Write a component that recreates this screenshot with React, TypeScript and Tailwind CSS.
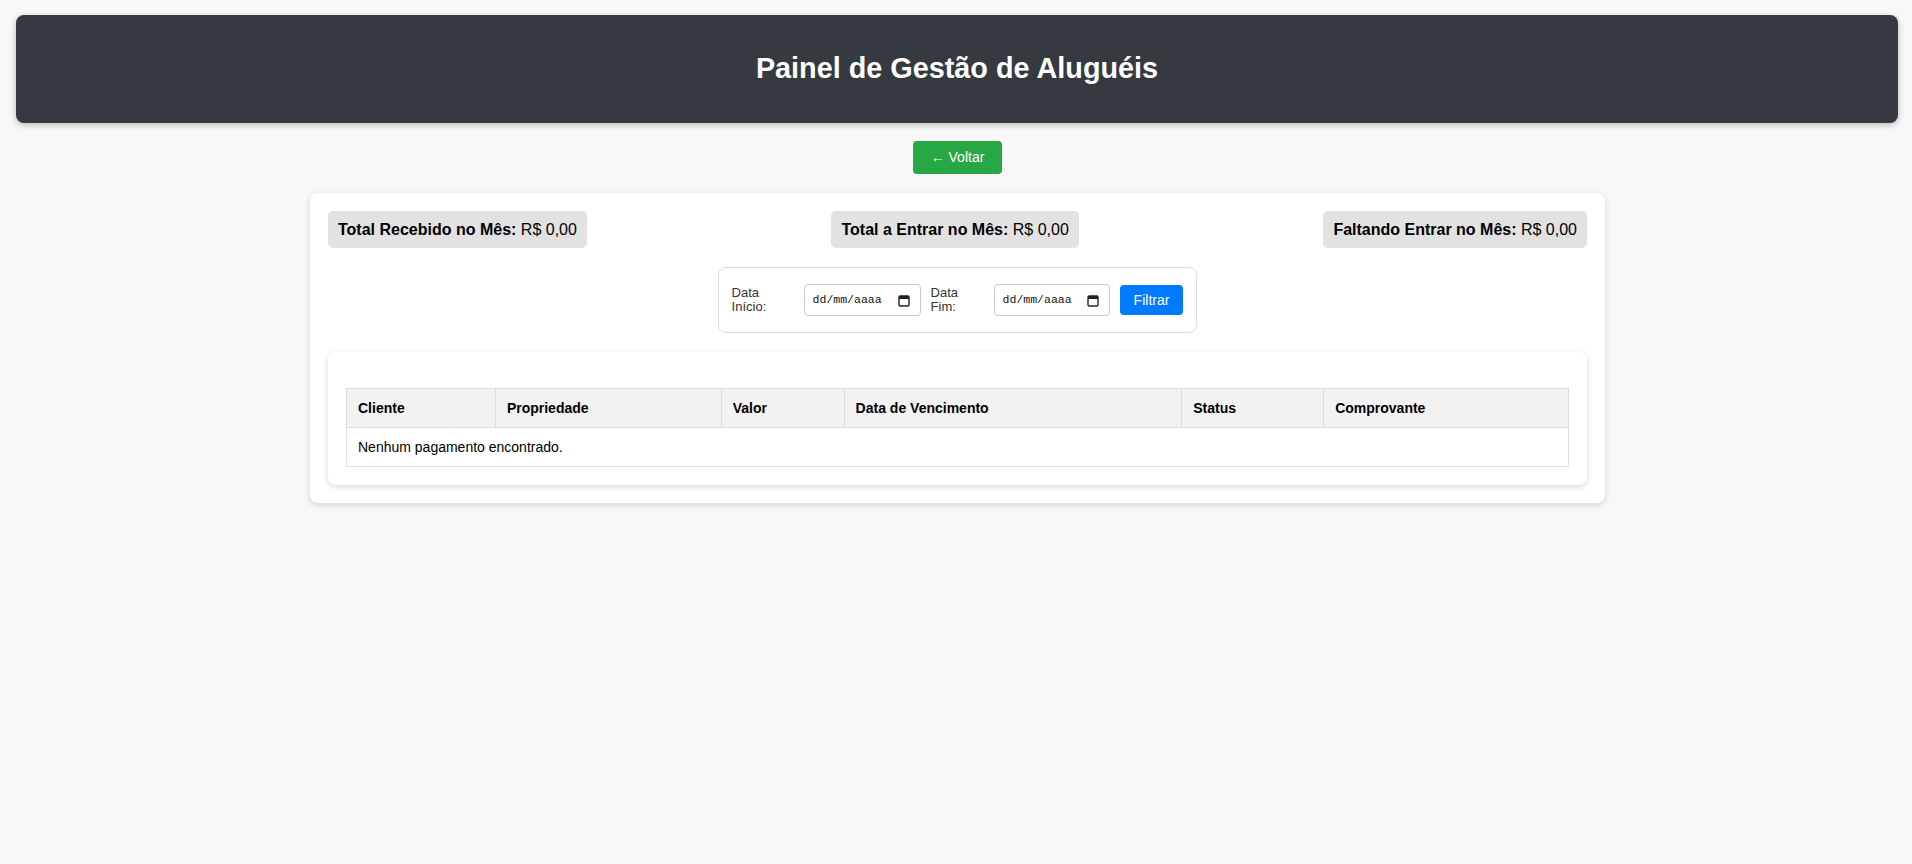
const columns = [
  { label: "Cliente", width: "w-[149px]" },
  { label: "Propriedade", width: "w-[226px]" },
  { label: "Valor", width: "w-[123px]" },
  { label: "Data de Vencimento", width: "w-[338px]" },
  { label: "Status", width: "w-[142px]" },
  { label: "Comprovante", width: "w-[245px]" },
];

const CalendarIcon = () => (
  <svg width="12" height="13" viewBox="0 0 12 13" fill="none">
    <rect x="1" y="2" width="10" height="10" rx="1.2" stroke="#222" strokeWidth="1.4" />
    <rect x="1" y="2" width="10" height="3" fill="#222" />
  </svg>
);

const DateField = ({ width }: { width: string }) => (
  <div
    className={`${width} flex h-[32px] items-center justify-between rounded-[4px] border border-[#c8c8c8] bg-white pl-[8px] pr-[10px]`}
  >
    <span className="font-['Liberation_Mono',monospace] text-[11.5px] text-[#111]">
      dd/mm/aaaa
    </span>
    <CalendarIcon />
  </div>
);

const SummaryBox = ({ title }: { title: string }) => (
  <div className="rounded-[5px] bg-[#e2e2e2] px-[10px] py-[10px] text-[16px] leading-[17px] text-black">
    <strong className="font-bold">{title}:</strong> R$ 0,00
  </div>
);

const App = () => {
  return (
    <div className="min-h-screen bg-[#f8f8f8] pb-10 pt-[15px] font-['Liberation_Sans',Arial,sans-serif]">
      <header className="ml-4 mr-[14px] flex h-[108px] items-center justify-center rounded-[8px] bg-[#343a40] shadow-[0_2px_6px_rgba(0,0,0,0.25)]">
        <h1 className="text-[28.8px] font-bold text-white">
          Painel de Gestão de Aluguéis
        </h1>
      </header>

      <div className="pl-[3px]">
        <div className="mt-[18px] flex justify-center">
          <button className="h-[33px] rounded-[4px] bg-[#28a745] px-[18px] text-[14px] text-white">
            ← Voltar
          </button>
        </div>

        <main className="mx-auto mt-[19px] w-[1295px] rounded-[8px] bg-white p-[18px] shadow-[0_2px_6px_rgba(0,0,0,0.15)]">
          <div className="flex items-center justify-between">
            <SummaryBox title="Total Recebido no Mês" />
            <SummaryBox title="Total a Entrar no Mês" />
            <SummaryBox title="Faltando Entrar no Mês" />
          </div>

          <div className="mt-[19px] flex justify-center">
            <div className="flex items-center gap-[10px] rounded-[8px] border border-[#dcdcdc] px-[13px] py-4 text-[13px] leading-[14px] text-[#333]">
              <label className="w-[62px]">Data Início:</label>
              <DateField width="w-[117px]" />
              <label className="w-[53px]">Data Fim:</label>
              <DateField width="w-[116px]" />
              <button className="h-[30px] rounded-[4px] bg-[#007bff] px-[14px] text-[14px] text-white">
                Filtrar
              </button>
            </div>
          </div>

          <div className="mt-[19px] rounded-[8px] bg-white p-[18px] pt-[36px] shadow-[0_2px_6px_rgba(0,0,0,0.15)]">
            <table className="w-full border-collapse text-left text-[14px] text-black">
              <thead>
                <tr className="bg-[#f2f2f2]">
                  {columns.map((col) => (
                    <th
                      key={col.label}
                      className={`${col.width} border border-[#dddddd] px-[11px] py-[11px] font-bold leading-[16px]`}
                    >
                      {col.label}
                    </th>
                  ))}
                </tr>
              </thead>
              <tbody>
                <tr>
                  <td
                    colSpan={6}
                    className="border border-[#dddddd] px-[11px] py-[11px] leading-[16px]"
                  >
                    Nenhum pagamento encontrado.
                  </td>
                </tr>
              </tbody>
            </table>
          </div>
        </main>
      </div>
    </div>
  );
};

export default App;
